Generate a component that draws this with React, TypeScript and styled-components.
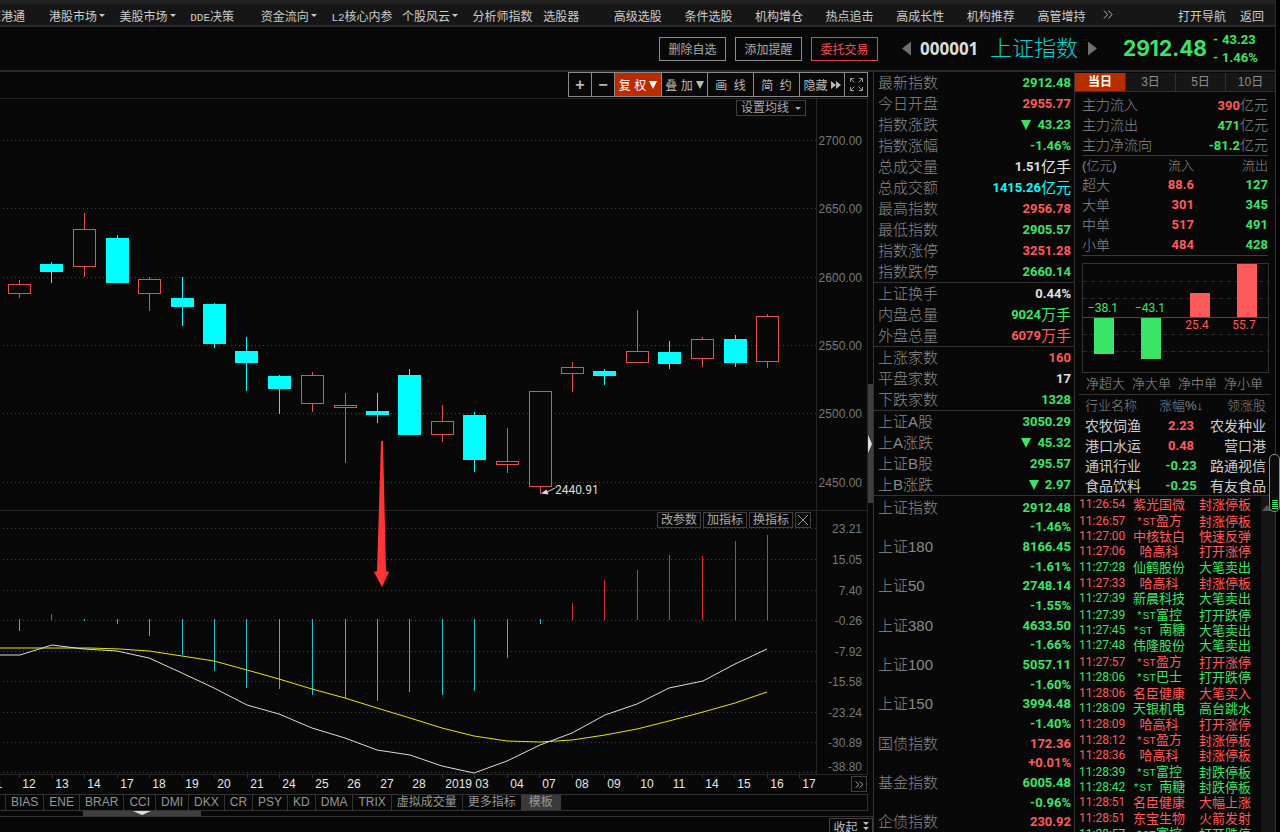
import React from "react";
import styled, { createGlobalStyle, css } from "styled-components";

const GREEN = "#3be466";
const RED = "#ff5a5a";
const CYAN = "#00ffff";
const WHITE = "#e0e0e0";
const LINE = "#333333";
const LABEL = "#8a8a8a";

const cjk = `"Liberation Sans", "Noto Sans CJK SC", sans-serif`;
const num = `Roboto, "Noto Sans CJK SC", sans-serif`;

type Tone = "up" | "down" | "flat" | "cyan";
const toneColor: Record<Tone, string> = { up: RED, down: GREEN, flat: WHITE, cyan: CYAN };

const GlobalStyle = createGlobalStyle`
  *, *::before, *::after { box-sizing: border-box; }
  body { margin: 0; background: #000; font-family: ${cjk}; font-size: 12px; color: #bdbdbd; }
  button { font: inherit; color: inherit; margin: 0; padding: 0; background: none; border: 0; cursor: pointer; }
  a { color: inherit; text-decoration: none; }
  table { border-spacing: 0; }
  th { font-weight: 300; text-align: left; }
  th, td { padding: 0; }
`;

const Page = styled.div`
  position: relative;
  display: flex;
  flex-direction: column;
  height: 100vh;
  overflow: hidden;
  padding-right: 4px;
  white-space: nowrap;
`;

const Latin = styled.span`
  font-family: "Liberation Mono", monospace;
  font-size: 11px;
`;

/* Navigation */
const Nav = styled.nav`
  display: flex;
  flex: none;
  height: 27px;
  padding-top: 1px;
  align-items: center;
  background: #161616;
  border-top: 4px solid #222;
  border-bottom: 2px solid #2b2b2b;
  border-right: 1px solid #2b2b2b;
  color: #cccccc;
`;
const NavEdge = styled.div`
  display: flex;
  justify-content: flex-end;
  width: 49px;
  padding-right: 24px;
  overflow: hidden;
`;
const NavGrid = styled.div`
  display: grid;
  grid-template-columns: repeat(15, 1fr);
  flex: 1;
`;
const NavCell = styled.div`
  display: flex;
  align-items: center;
  gap: 18px;
  min-width: 0;
`;
const NavLink = styled.a`
  display: flex;
  flex: none;
  align-items: center;
  gap: 2px;
`;
const NavEnd = styled.div`
  display: flex;
  width: 167px;
  padding-left: 70px;
  gap: 14px;
`;
const Caret = styled.span`
  border: 3px solid transparent;
  border-top-color: currentColor;
  border-bottom: 0;
`;

/* Title bar */
const Header = styled.header`
  display: flex;
  flex: none;
  align-items: center;
  justify-content: flex-end;
  height: 45px;
  padding-right: 15px;
  background: #080808;
  border-bottom: 2px solid #2b2b2b;
  border-right: 1px solid #2b2b2b;
`;
const Actions = styled.div`
  display: flex;
  gap: 9px;
  margin-right: 24px;
`;
const ActionButton = styled.button<{ $hot?: boolean }>`
  width: 67px;
  height: 24px;
  border: 1px solid ${(p) => (p.$hot ? "#e24848" : "#8c8c8c")};
  color: ${(p) => (p.$hot ? "#f05050" : "#a8a8a8")};
`;
const Stepper = styled.button<{ $next?: boolean }>`
  width: 9px;
  height: 14px;
  background: #6f6f6f;
  clip-path: ${(p) => (p.$next ? "polygon(0 0, 100% 50%, 0 100%)" : "polygon(100% 0, 0 50%, 100% 100%)")};
`;
const Code = styled.span`
  width: 61px;
  margin: 0 9px;
  font: 700 17px/24px "Open Sans", sans-serif;
  color: #dcdcdc;
`;
const IndexName = styled.h1`
  width: 88px;
  margin: 0 10px 0 0;
  font-size: 22px;
  line-height: 28px;
  font-weight: 300;
  color: #00d5d5;
`;
const Price = styled.strong`
  width: 86px;
  margin: 0 4px 0 26px;
  font: 700 21px/28px Inter, sans-serif;
  color: ${GREEN};
`;
const Delta = styled.div`
  display: grid;
  grid-template-columns: 9px 38px;
  font: 700 13px/18px ${num};
  color: ${GREEN};
`;

/* Body */
const Body = styled.div`
  display: flex;
  flex: 1;
  min-height: 0;
  background: #080808;
  border-right: 1px solid ${LINE};
`;
const Left = styled.main`
  display: flex;
  flex: 1;
  flex-direction: column;
  min-width: 0;
`;
const LeftTop = styled.div`
  display: flex;
  flex: none;
`;
const Charts = styled.section`
  position: relative;
  flex: 1;
  min-width: 0;
`;
const Toolbar = styled.div`
  display: flex;
  justify-content: flex-end;
  height: 27px;
  padding-bottom: 2px;
  border-bottom: 1px solid #262626;
`;
const ToolButton = styled.button<{ $w: number; $active?: boolean }>`
  display: flex;
  align-items: center;
  justify-content: center;
  gap: 3px;
  width: ${(p) => p.$w}px;
  height: 25px;
  border: 1px solid #8a8a8a;
  border-right-width: 0;
  color: #b8b8b8;
  ${(p) => p.$active && css`background: #b82c00; color: #fff;`}
  &:last-child { border-right-width: 1px; }
`;
const Sign = styled.span`
  font: 700 16px/20px "Liberation Sans", sans-serif;
`;
const Drop = styled.span`
  border: 4px solid transparent;
  border-top: 8px solid currentColor;
  border-bottom: 0;
`;
const Pane = styled.div<{ $h: number }>`
  position: relative;
  display: flex;
  height: ${(p) => p.$h}px;
  border-bottom: 1px solid #262626;
`;
const Plot = styled.svg`
  flex: 1;
  min-width: 0;
  height: 100%;
`;
const Axis = styled.svg`
  width: 52px;
  height: 100%;
  border-left: 1px solid #262626;
  border-right: 1px solid #262626;
  font: 12px "Liberation Sans", sans-serif;
`;
const Floating = styled.div<{ $right: number }>`
  position: absolute;
  top: 1px;
  right: ${(p) => p.$right}px;
  display: flex;
  gap: 2px;
`;
const SmallButton = styled.button<{ $w: number }>`
  display: flex;
  align-items: center;
  justify-content: center;
  gap: 6px;
  width: ${(p) => p.$w}px;
  height: 16px;
  border: 1px solid #404040;
  background: #080808;
  line-height: 14px;
  color: #ababab;
`;
const Arrow = styled.svg`
  position: absolute;
  left: 0;
  top: 27px;
  width: 400px;
  height: 500px;
  pointer-events: none;
`;
const Dates = styled.div`
  position: relative;
  display: flex;
  height: 19px;
`;
const MoreDates = styled.button`
  display: flex;
  align-items: center;
  justify-content: center;
  width: 16px;
  height: 16px;
  margin: 1px 1px 0 0;
  border: 1px solid #404040;
`;
const Tabs = styled.div`
  display: flex;
  height: 17px;
  padding-left: 5px;
  border: 1px solid ${LINE};
  border-left: 0;
  color: #969696;
`;
const Tab = styled.button<{ $active?: boolean }>`
  padding: 0 5px;
  border-left: 1px solid ${LINE};
  line-height: 15px;
  ${(p) => p.$active && css`padding: 0 8px; background: #3a3a3a; border-left: 0;`}
`;
const Strip = styled.div`
  height: 5px;
  padding-left: 83px;
`;
const StripThumb = styled.button`
  display: flex;
  justify-content: center;
  width: 118px;
  height: 5px;
  background: #3f3f3f;
  svg { display: block; }
`;
const Gutter = styled.div`
  width: 5px;
  padding-top: 312px;
`;
const GutterThumb = styled.button`
  display: flex;
  align-items: center;
  width: 5px;
  height: 119px;
  background: #3f3f3f;
`;
const Footer = styled.footer`
  display: flex;
  flex: 1;
  justify-content: flex-end;
  border-top: 1px solid ${LINE};
  padding-top: 1px;
  min-height: 0;
  overflow: hidden;
`;
const Collapse = styled.button`
  display: flex;
  align-items: center;
  justify-content: center;
  gap: 5px;
  width: 44px;
  height: 17px;
  border: 1px solid #404040;
`;

/* Quote column */
const Side = styled.aside`
  display: flex;
  flex: none;
  flex-direction: column;
  width: 201px;
  border-left: 1px solid ${LINE};
  min-height: 0;
  overflow: hidden;
`;
const QuoteTable = styled.table`
  display: block;
  flex: none;
`;
const QuoteGroup = styled.tbody`
  display: block;
  border-bottom: 1px solid ${LINE};
`;
const QuoteRow = styled.tr`
  display: flex;
  align-items: center;
  justify-content: space-between;
  height: 21px;
  padding: 0 3px 0 4px;
  line-height: 20px;
`;
const QuoteLabel = styled.th`
  font-size: 15px;
  color: ${LABEL};
`;
const Value = styled.td<{ $tone: Tone }>`
  display: flex;
  align-items: center;
  font: 700 13px/20px ${num};
  color: ${(p) => toneColor[p.$tone]};
`;
const Unit = styled.span`
  font-size: 15px;
  font-weight: 400;
`;
const Fall = styled.span`
  margin-right: 6px;
  border: 5px solid transparent;
  border-top: 10px solid currentColor;
  border-bottom: 0;
`;
const IndexTable = styled.table`
  display: flex;
  flex: 1;
  min-height: 0;
  padding-top: 2px;
`;
const IndexBody = styled.tbody`
  display: grid;
  flex: 1;
  grid-template-rows: repeat(17, minmax(0, 1fr));
`;
const IndexRow = styled(QuoteRow)`
  height: auto;
`;

/* Fund flow column */
const PeriodTabs = styled.div`
  display: grid;
  flex: none;
  grid-template-columns: repeat(4, 1fr);
  height: 20px;
  padding-top: 1px;
  border-bottom: 1px solid ${LINE};
`;
const Period = styled.button<{ $active?: boolean }>`
  background: ${(p) => (p.$active ? "#b82c00" : "#161616")};
  color: ${(p) => (p.$active ? "#fff" : "#8f8f8f")};
  font-weight: ${(p) => (p.$active ? 700 : 400)};
  line-height: 18px;
  & + & { border-left: 1px solid ${LINE}; }
`;
const FlowTable = styled.table`
  display: block;
  flex: none;
  margin: 0 7px;
`;
const FlowSection = styled.tbody`
  display: block;
  padding-top: 3px;
  border-bottom: 1px solid #3a3a3a;
  & + & { padding-top: 1px; }
`;
const FlowRow = styled.tr`
  display: flex;
  align-items: center;
  justify-content: space-between;
  height: 20px;
  line-height: 20px;
  font-size: 14px;
  color: ${LABEL};
`;
const FlowValue = styled.td<{ $tone: Tone }>`
  font: 700 13px/20px ${num};
  color: ${(p) => toneColor[p.$tone]};
`;
const FlowUnit = styled.span`
  font-size: 14px;
  font-weight: 300;
  color: ${LABEL};
`;
const SizeRow = styled.tr`
  display: grid;
  grid-template-columns: 52px 60px 1fr;
  align-items: center;
  height: 20px;
  line-height: 20px;
  font-size: 14px;
  color: ${LABEL};
  & > :nth-child(2), & > :nth-child(3) { text-align: right; }
  &:first-child { height: 18px; line-height: 16px; font-size: 13px; }
`;
const FlowChart = styled.svg`
  display: block;
  flex: none;
  width: 187px;
  height: 110px;
  margin: 7px 0 0 7px;
  border: 1px solid ${LINE};
  font: 12px Roboto, sans-serif;
`;
const FlowLegend = styled.div`
  display: flex;
  flex: none;
  justify-content: space-between;
  margin: 0 4px;
  padding: 0 8px 0 7px;
  height: 22px;
  font-size: 13px;
  font-weight: 300;
  line-height: 22px;
  color: #969696;
  border-bottom: 1px solid ${LINE};
`;
const SectorTable = styled.table`
  display: block;
  flex: none;
  padding: 1px 9px 0 10px;
  height: 101px;
  border-bottom: 1px solid ${LINE};
`;
const SectorBody = styled.tbody`
  display: block;
`;
const SectorHead = styled.thead`
  display: block;
`;
const SectorRow = styled.tr<{ $head?: boolean }>`
  display: grid;
  grid-template-columns: 72px 48px 1fr;
  align-items: center;
  height: 20px;
  font-size: ${(p) => (p.$head ? 13 : 14)}px;
  line-height: 20px;
  color: ${(p) => (p.$head ? LABEL : "#cccccc")};
  & > :nth-child(2) {
    justify-self: center;
    ${(p) => !p.$head && css`font: 700 13px/20px ${num};`}
  }
  & > :nth-child(3) { text-align: right; }
`;
const Feed = styled.div`
  display: flex;
  flex: 1;
  min-height: 0;
`;
const FeedTable = styled.table`
  display: flex;
  flex: 1;
  margin-bottom: -10px;
  padding-top: 1px;
`;
const FeedBody = styled.tbody`
  display: grid;
  flex: 1;
  grid-template-rows: repeat(22, minmax(0, 1fr));
`;
const FeedRow = styled.tr<{ $tone: Tone }>`
  display: grid;
  grid-template-columns: 54px 60px 1fr;
  align-items: center;
  font-size: 13px;
  line-height: 15px;
  color: ${(p) => toneColor[p.$tone]};
  & > :first-child { padding-left: 4px; font: 12px/15px Roboto, sans-serif; }
  & > :nth-child(2) { text-align: center; }
  & > :nth-child(3) { padding-left: 10px; }
`;
const FeedTrack = styled.div`
  width: 14px;
  padding: 4px 0 0 1px;
  background: #161616;
`;
const VolumePill = styled.div`
  position: absolute;
  right: 0;
  top: 454px;
  width: 11px;
  height: 58px;
  padding: 45px 2px 0;
  border: 1px solid #8c8c8c;
  border-radius: 5px;
  background: #0c0c0c;
  svg { display: block; }
`;

const navItems: [string, boolean?][] = [
  ["港股市场", true], ["美股市场", true], ["DDE决策"], ["资金流向", true], ["L2核心内参"],
  ["个股风云", true], ["分析师指数"], ["选股器"], ["高级选股"], ["条件选股"],
  ["机构增仓"], ["热点追击"], ["高成长性"], ["机构推荐"], ["高管增持"],
];

/* centre x, body top, body bottom, high, low, rising */
const candles: [number, number, number, number, number, boolean][] = [
  [19, 284, 294, 280, 298, true], [51, 264, 272, 262, 283, false], [84, 229, 267, 213, 277, true],
  [117, 238, 283, 235, 283, false], [149, 279, 294, 277, 311, true], [182, 298, 307, 277, 326, false],
  [214, 304, 344, 303, 348, false], [246, 351, 363, 337, 391, false], [279, 376, 389, 375, 414, false],
  [312, 375, 404, 372, 412, true], [345, 405, 408, 393, 463, true], [377, 411, 415, 393, 423, false],
  [409, 375, 435, 369, 435, false], [442, 421, 435, 405, 442, true], [474, 415, 460, 412, 472, false],
  [507, 461, 465, 428, 473, true], [540, 391, 487, 391, 494, true], [572, 367, 374, 362, 392, true],
  [604, 371, 376, 369, 385, false], [637, 351, 363, 310, 363, true], [669, 352, 364, 341, 369, false],
  [702, 339, 359, 337, 367, true], [735, 339, 363, 335, 367, false], [767, 316, 362, 314, 368, true],
];
const momentum = [
  631, 614, 621, 624, 636, 655, 671, 688, 689, 695, 698, 701, 692, 695, 691, 658, 624, 603, 580, 570, 555, 556, 541, 535,
];
const priceGrid: [number, string][] = [
  [140, "2700.00"], [208, "2650.00"], [277, "2600.00"], [345, "2550.00"], [413, "2500.00"], [482, "2450.00"],
];
const macdGrid: [number, string][] = [
  [528, "23.21"], [559, "15.05"], [590, "7.40"], [620, "-0.26"], [651, "-7.92"],
  [681, "-15.58"], [712, "-23.24"], [742, "-30.89"], [772, "-38.80"],
];
const fastLine =
  "0,655 20,655 36,650 52,645 84,649 117,651 149,658 182,673 214,688 247,705 279,714 312,728 345,738 377,750 410,755 442,766 474,773 507,761 540,745 572,733 605,715 637,704 669,688 703,681 735,664 767,649";
const slowLine =
  "0,648 52,648 90,648 120,649 149,651 182,656 214,661 247,670 279,679 312,689 345,698 377,708 410,718 442,728 474,736 507,741 540,742 572,740 605,735 637,729 669,721 703,712 735,703 767,692";
/* One label per trading day; the slot before the first day of the new year holds the year. */
const dates = [
  "12", "13", "14", "17", "18", "19", "20", "21", "24", "25", "26", "27", "28", "", "2019 03", "04", "07",
  "08", "09", "10", "11", "14", "15", "16", "17",
];
const indicators = ["BIAS", "ENE", "BRAR", "CCI", "DMI", "DKX", "CR", "PSY", "KD", "DMA", "TRIX", "虚拟成交量", "更多指标"];

type Quote = { label: string; value: string; unit?: string; tone: Tone; fall?: boolean };
const quoteGroups: Quote[][] = [
  [
    { label: "最新指数", value: "2912.48", tone: "down" },
    { label: "今日开盘", value: "2955.77", tone: "up" },
    { label: "指数涨跌", value: "43.23", tone: "down", fall: true },
    { label: "指数涨幅", value: "-1.46%", tone: "down" },
    { label: "总成交量", value: "1.51", unit: "亿手", tone: "flat" },
    { label: "总成交额", value: "1415.26", unit: "亿元", tone: "cyan" },
    { label: "最高指数", value: "2956.78", tone: "up" },
    { label: "最低指数", value: "2905.57", tone: "down" },
    { label: "指数涨停", value: "3251.28", tone: "up" },
    { label: "指数跌停", value: "2660.14", tone: "down" },
  ],
  [
    { label: "上证换手", value: "0.44%", tone: "flat" },
    { label: "内盘总量", value: "9024", unit: "万手", tone: "down" },
    { label: "外盘总量", value: "6079", unit: "万手", tone: "up" },
  ],
  [
    { label: "上涨家数", value: "160", tone: "up" },
    { label: "平盘家数", value: "17", tone: "flat" },
    { label: "下跌家数", value: "1328", tone: "down" },
  ],
  [
    { label: "上证A股", value: "3050.29", tone: "down" },
    { label: "上A涨跌", value: "45.32", tone: "down", fall: true },
    { label: "上证B股", value: "295.57", tone: "down" },
    { label: "上B涨跌", value: "2.97", tone: "down", fall: true },
  ],
];
const indices: [string, string, string, Tone][] = [
  ["上证指数", "2912.48", "-1.46%", "down"],
  ["上证180", "8166.45", "-1.61%", "down"],
  ["上证50", "2748.14", "-1.55%", "down"],
  ["上证380", "4633.50", "-1.66%", "down"],
  ["上证100", "5057.11", "-1.60%", "down"],
  ["上证150", "3994.48", "-1.40%", "down"],
  ["国债指数", "172.36", "+0.01%", "up"],
  ["基金指数", "6005.48", "-0.96%", "down"],
  ["企债指数", "230.92", "", "up"],
];
const totals: [string, string, Tone][] = [
  ["主力流入", "390", "up"],
  ["主力流出", "471", "down"],
  ["主力净流向", "-81.2", "down"],
];
const sizes: [string, string, string][] = [
  ["超大", "88.6", "127"], ["大单", "301", "345"], ["中单", "517", "491"], ["小单", "484", "428"],
];
/* x, y, height, value, label centre x, label baseline */
const flowBars: [number, number, number, string, number, number][] = [
  [11, 54, 36, "−38.1", 20, 48], [58, 54, 41, "−43.1", 67, 48], [107, 29, 24, "25.4", 114, 65], [154, 0, 53, "55.7", 161, 65],
];
const sectors: [string, string, string, Tone][] = [
  ["农牧饲渔", "2.23", "农发种业", "up"],
  ["港口水运", "0.48", "营口港", "up"],
  ["通讯行业", "-0.23", "路通视信", "down"],
  ["食品饮料", "-0.25", "有友食品", "down"],
];
const feed: [string, string, string, Tone][] = [
  ["11:26:54", "紫光国微", "封涨停板", "up"],
  ["11:26:57", "*ST盈方", "封涨停板", "up"],
  ["11:27:00", "中核钛白", "快速反弹", "up"],
  ["11:27:06", "哈高科", "打开涨停", "up"],
  ["11:27:28", "仙鹤股份", "大笔卖出", "down"],
  ["11:27:33", "哈高科", "封涨停板", "up"],
  ["11:27:39", "新晨科技", "大笔卖出", "down"],
  ["11:27:39", "*ST富控", "打开跌停", "down"],
  ["11:27:45", "*ST 南糖", "大笔卖出", "down"],
  ["11:27:48", "伟隆股份", "大笔卖出", "down"],
  ["11:27:57", "*ST盈方", "打开涨停", "up"],
  ["11:28:06", "*ST巴士", "打开跌停", "down"],
  ["11:28:06", "名臣健康", "大笔买入", "up"],
  ["11:28:09", "天银机电", "高台跳水", "down"],
  ["11:28:09", "哈高科", "打开涨停", "up"],
  ["11:28:12", "*ST盈方", "封涨停板", "up"],
  ["11:28:36", "哈高科", "封涨停板", "up"],
  ["11:28:39", "*ST富控", "封跌停板", "down"],
  ["11:28:42", "*ST 南糖", "封跌停板", "down"],
  ["11:28:51", "名臣健康", "大幅上涨", "up"],
  ["11:28:51", "东宝生物", "火箭发射", "up"],
  ["11:28:57", "*ST富控", "打开跌停", "down"],
];

/* Sets the leading Latin part of a label in the narrow mono face. */
function Mixed({ text }: { text: string }) {
  const m = /^([*A-Z0-9 ]+)(.*)$/.exec(text);
  return m ? (<><Latin>{m[1]}</Latin>{m[2]}</>) : <>{text}</>;
}

function GridLines({ rows }: { rows: [number, string][] }) {
  return (
    <>
      {rows.map(([y]) => (
        <line key={y} x1="3" x2="100%" y1={y + 0.5} y2={y + 0.5} stroke="#454545" strokeDasharray="1 3" />
      ))}
    </>
  );
}

function PricePlot() {
  return (
    <Plot aria-label="K线图">
      <g transform="translate(0 -99)">
        <GridLines rows={priceGrid} />
        {candles.map(([x, top, bottom, high, low, up]) => (
          <g key={x} stroke={up ? "#e4504c" : CYAN} shapeRendering="crispEdges">
            <path d={`M${x + 0.5} ${high}V${top}M${x + 0.5} ${bottom}V${low}`} />
            <rect x={x - 10.5} y={top + 0.5} width="22" height={bottom - top - 1} fill={up ? "#080808" : CYAN} />
          </g>
        ))}
        <path d="M555 488L547 492" stroke="#ddd" />
        <path d="M541 493.500L546.500 489.500L548.500 494.500Z" fill="#ddd" />
        <text x="555" y="494" fill="#ddd" fontSize="12" fontFamily="Roboto, sans-serif">2440.91</text>
      </g>
    </Plot>
  );
}

function MacdPlot() {
  return (
    <Plot aria-label="MACD">
      <g transform="translate(0 -511)">
        <GridLines rows={macdGrid} />
        {candles.map(([x], i) => {
          const rising = momentum[i] < 619;
          return (
            <path
              key={x}
              d={`M${x + 0.5} ${rising ? 620 : 619}V${momentum[i]}`}
              stroke={rising ? "#d83434" : "#18c4cc"}
              shapeRendering="crispEdges"
            />
          );
        })}
        <polyline points={slowLine} fill="none" stroke="#e6e600" />
        <polyline points={fastLine} fill="none" stroke="#dcdcdc" />
      </g>
    </Plot>
  );
}

export default function App() {
  return (
    <Page>
      <GlobalStyle />
      <Nav>
        <NavEdge><NavLink href="#">深港通</NavLink></NavEdge>
        <NavGrid>
          {navItems.map(([text, menu], i) => (
            <NavCell key={text}>
              <NavLink href="#">
                <span><Mixed text={text} /></span>
                {menu && <Caret />}
              </NavLink>
              {i === navItems.length - 1 && (
                <button aria-label="更多">
                  <svg width="10" height="9" fill="none" stroke="#b0b0b0">
                    <path d="M1 .5L4.500 4.500L1 8.500M5.500 .5L9 4.500L5.500 8.500" />
                  </svg>
                </button>
              )}
            </NavCell>
          ))}
        </NavGrid>
        <NavEnd>
          <NavLink href="#">打开导航</NavLink>
          <NavLink href="#">返回</NavLink>
        </NavEnd>
      </Nav>

      <Header>
        <Actions>
          <ActionButton>删除自选</ActionButton>
          <ActionButton>添加提醒</ActionButton>
          <ActionButton $hot>委托交易</ActionButton>
        </Actions>
        <Stepper aria-label="上一个" />
        <Code>000001</Code>
        <IndexName>上证指数</IndexName>
        <Stepper $next aria-label="下一个" />
        <Price>2912.48</Price>
        <Delta>
          <span>-</span><span>43.23</span>
          <span>-</span><span>1.46%</span>
        </Delta>
      </Header>

      <Body>
        <Left>
          <LeftTop>
            <Charts>
              <Toolbar>
                <ToolButton $w={23} aria-label="放大"><Sign>+</Sign></ToolButton>
                <ToolButton $w={23} aria-label="缩小"><Sign>−</Sign></ToolButton>
                <ToolButton $w={47} $active>复 权 <Drop /></ToolButton>
                <ToolButton $w={46}>叠 加 <Drop /></ToolButton>
                <ToolButton $w={46}>画&nbsp; 线</ToolButton>
                <ToolButton $w={46}>简&nbsp; 约</ToolButton>
                <ToolButton $w={45}>
                  隐藏
                  <svg width="10" height="8" fill="currentColor"><path d="M0 0L5 4L0 8ZM5 0L10 4L5 8Z" /></svg>
                </ToolButton>
                <ToolButton $w={24} aria-label="全屏">
                  <svg width="13" height="13" fill="none" stroke="#999">
                    <path d="M.5 4V.5H4M.5 .5L4.500 4.500M9 .5H12.500V4M12.500 .5L8.500 4.500M.5 9V12.500H4M.5 12.500L4.500 8.500M9 12.500H12.500V9M12.500 12.500L8.500 8.500" />
                  </svg>
                </ToolButton>
              </Toolbar>
              <Pane $h={412}>
                <PricePlot />
                <Axis>
                  {priceGrid.map(([y, t]) => (
                    <text key={t} x="45" y={y - 94} fill="#777" textAnchor="end">{t}</text>
                  ))}
                </Axis>
                <Floating $right={62}>
                  <SmallButton $w={70}>设置均线 <Caret /></SmallButton>
                </Floating>
              </Pane>
              <Pane $h={264}>
                <MacdPlot />
                <Axis>
                  {macdGrid.map(([y, t], i) => (
                    <text key={t} x="45" y={(i === 8 ? y - 1 : y + 5) - 511} fill="#777" textAnchor="end">{t}</text>
                  ))}
                </Axis>
                <Floating $right={57}>
                  <SmallButton $w={44}>改参数</SmallButton>
                  <SmallButton $w={44}>加指标</SmallButton>
                  <SmallButton $w={44}>换指标</SmallButton>
                  <SmallButton $w={16} aria-label="关闭">
                    <svg width="10" height="10" stroke="#999"><path d="M0 0L10 10M10 0L0 10" /></svg>
                  </SmallButton>
                </Floating>
              </Pane>
              <Arrow aria-hidden="true">
                <path d="M381 342L383 342L386 472L389 473L382 488L374 473L377 472Z" fill="#ff3434" />
              </Arrow>
              <Dates>
                <Plot fontSize="12" fontFamily='"Liberation Sans", sans-serif' fill="#e6e6e6" textAnchor="middle">
                  <text x="-4" y="13">11</text>
                  {dates.map((d, i) => (
                    <React.Fragment key={i}>
                      <path d={`M${Math.round(19 + i * 32.500)}.5 0V3`} stroke="#333" />
                      <text x={d.length > 2 ? 467 : Math.round(29 + i * 32.500)} y="13">{d}</text>
                    </React.Fragment>
                  ))}
                </Plot>
                <MoreDates aria-label="更多日期">
                  <svg width="9" height="7" fill="none" stroke="#999"><path d="M.5 .5L4 3.500L.5 6.500M4.500 .5L8 3.500L4.500 6.500" /></svg>
                </MoreDates>
              </Dates>
              <Tabs>
                {indicators.map((t) => <Tab key={t}>{t}</Tab>)}
                <Tab $active>模板</Tab>
              </Tabs>
              <Strip>
                <StripThumb aria-label="展开">
                  <svg width="18" height="4"><path d="M0 0H18L9 4Z" fill="#ddd" /></svg>
                </StripThumb>
              </Strip>
            </Charts>
            <Gutter>
              <GutterThumb aria-label="收起侧栏">
                <svg width="4" height="18"><path d="M0 0V18L4 9Z" fill="#ddd" /></svg>
              </GutterThumb>
            </Gutter>
          </LeftTop>
          <Footer>
            <Collapse>
              收起
              <svg width="6" height="9" fill="currentColor"><path d="M0 0H6L3 3ZM0 5H6L3 8Z" /></svg>
            </Collapse>
          </Footer>
        </Left>

        <Side>
          <QuoteTable>
            {quoteGroups.map((g, i) => (
              <QuoteGroup key={i}>
                {g.map((q) => (
                  <QuoteRow key={q.label}>
                    <QuoteLabel scope="row">{q.label}</QuoteLabel>
                    <Value $tone={q.tone}>
                      {q.fall && <Fall />}
                      {q.value}
                      {q.unit && <Unit>{q.unit}</Unit>}
                    </Value>
                  </QuoteRow>
                ))}
              </QuoteGroup>
            ))}
          </QuoteTable>
          <IndexTable>
            <IndexBody>
              {indices.map(([name, value, pct, tone]) => (
                <React.Fragment key={name}>
                  <IndexRow>
                    <QuoteLabel scope="row">{name}</QuoteLabel>
                    <Value $tone={tone}>{value}</Value>
                  </IndexRow>
                  {pct && <IndexRow><td /><Value $tone={tone}>{pct}</Value></IndexRow>}
                </React.Fragment>
              ))}
            </IndexBody>
          </IndexTable>
        </Side>

        <Side>
          <PeriodTabs>
            <Period $active>当日</Period>
            <Period>3日</Period>
            <Period>5日</Period>
            <Period>10日</Period>
          </PeriodTabs>
          <FlowTable>
            <FlowSection>
              {totals.map(([name, value, tone]) => (
                <FlowRow key={name}>
                  <th scope="row">{name}</th>
                  <FlowValue $tone={tone}>{value}<FlowUnit>亿元</FlowUnit></FlowValue>
                </FlowRow>
              ))}
            </FlowSection>
            <FlowSection>
              <SizeRow><th>(亿元)</th><th>流入</th><th>流出</th></SizeRow>
              {sizes.map(([name, inflow, outflow]) => (
                <SizeRow key={name}>
                  <th scope="row">{name}</th>
                  <FlowValue $tone="up">{inflow}</FlowValue>
                  <FlowValue $tone="down">{outflow}</FlowValue>
                </SizeRow>
              ))}
            </FlowSection>
          </FlowTable>
          <FlowChart aria-label="净流向">
            {[17, 34, 70, 87].map((y) => (
              <line key={y} x1="0" x2="187" y1={y + 0.5} y2={y + 0.5} stroke="#2e2e2e" strokeDasharray="4 4" />
            ))}
            {flowBars.map(([x, y, h, v, cx, ty]) => (
              <g key={v} fill={y === 54 ? GREEN : RED}>
                <rect x={x} y={y} width="20" height={h} />
                <text x={cx} y={ty} textAnchor="middle">{v}</text>
              </g>
            ))}
            <line x1="0" x2="187" y1="53.500" y2="53.500" stroke="#4a4a4a" />
          </FlowChart>
          <FlowLegend>
            <span>净超大</span><span>净大单</span><span>净中单</span><span>净小单</span>
          </FlowLegend>
          <SectorTable>
            <SectorHead>
              <SectorRow $head><th>行业名称</th><th>涨幅%↓</th><th>领涨股</th></SectorRow>
            </SectorHead>
            <SectorBody>
              {sectors.map(([name, pct, lead, tone]) => (
                <SectorRow key={name}>
                  <td>{name}</td>
                  <Value as="td" $tone={tone}>{pct}</Value>
                  <td>{lead}</td>
                </SectorRow>
              ))}
            </SectorBody>
          </SectorTable>
          <Feed>
            <FeedTable>
              <FeedBody>
                {feed.map(([time, name, act, tone], i) => (
                  <FeedRow key={i} $tone={tone}>
                    <td>{time}</td>
                    <td><Mixed text={name} /></td>
                    <td>{act}</td>
                  </FeedRow>
                ))}
              </FeedBody>
            </FeedTable>
            <FeedTrack>
              <svg width="10" height="7"><path d="M0 7L5 1L10 7Z" fill="#555" /></svg>
            </FeedTrack>
          </Feed>
        </Side>
      </Body>
      <VolumePill>
        <svg width="6" height="9" stroke={GREEN}><path d="M0 .5H6M0 2.500H6M0 4.500H6M0 6.500H6M0 8.500H6" /></svg>
      </VolumePill>
    </Page>
  );
}
